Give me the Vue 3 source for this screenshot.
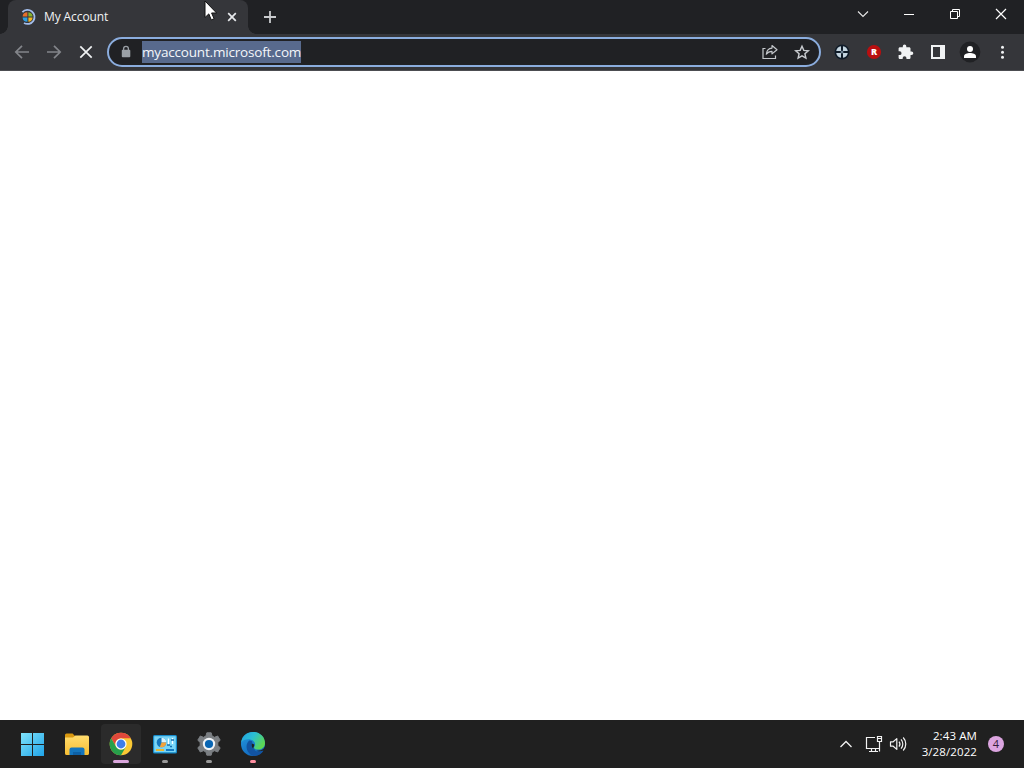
<script setup>
import { ref } from "vue"

const title = ref("My Account")
const url = ref("myaccount.microsoft.com")
const time = ref("2:43 AM")
const date = ref("3/28/2022")
const notifications = ref(4)
</script>

<template>
  <div class="screen">
    <!-- tab strip -->
    <div class="tabstrip">
      <div class="tab">
        <svg width="18" height="18" viewBox="0 0 18 18">
          <path d="M3.4 4.2A7 7 0 1 1 5 15" fill="none" stroke="#a3bdeb" stroke-width="1.8" />
          <path d="M8.4 4.2v4.2H3.6a4.8 4.8 0 0 1 4.8-4.2z" fill="#e5702b" />
          <path d="M9.4 4.2v4.2h4.2a4.8 4.8 0 0 0-4.2-4.2z" fill="#86b32c" />
          <path d="M8.4 13.8V9.4H3.6a4.8 4.8 0 0 0 4.8 4.4z" fill="#2d9fe0" />
          <path d="M9.4 13.8V9.4h4.2a4.8 4.8 0 0 1-4.2 4.4z" fill="#f3b51e" />
        </svg>
        <span class="tab-title">{{ title }}</span>
        <svg width="16" height="16" viewBox="0 0 16 16">
          <path d="M4.2 4.2l7.6 7.6M11.8 4.2l-7.6 7.6" stroke="#e8eaed" stroke-width="1.7" />
        </svg>
      </div>
      <svg class="new-tab" width="28" height="28" viewBox="0 0 28 28">
        <path d="M14 8v12M8 14h12" stroke="#c9cbce" stroke-width="1.8" />
      </svg>
      <div class="win-controls">
        <svg width="46" height="28" viewBox="0 0 46 28">
          <path d="M18 11.5l5 5 5-5" fill="none" stroke="#e8e8e8" stroke-width="1.1" />
        </svg>
        <svg width="46" height="28" viewBox="0 0 46 28">
          <path d="M18 14.5h10" stroke="#fff" stroke-width="1" />
        </svg>
        <svg width="46" height="28" viewBox="0 0 46 28">
          <path d="M18.5 11.5h7v7h-7zM20.5 11.5v-2h7v7h-2" fill="none" stroke="#fff" stroke-width="1" />
        </svg>
        <svg width="46" height="28" viewBox="0 0 46 28">
          <path d="M18 9l10 10M28 9l-10 10" stroke="#fff" stroke-width="1.2" />
        </svg>
      </div>
    </div>

    <!-- toolbar -->
    <div class="toolbar">
      <svg width="32" height="32" viewBox="0 0 32 32">
        <path d="M23 16H10M16 9.8L9.8 16l6.2 6.2" fill="none" stroke="#83858a" stroke-width="1.7" />
      </svg>
      <svg width="32" height="32" viewBox="0 0 32 32">
        <path d="M9 16h13M16 9.8l6.2 6.2-6.2 6.2" fill="none" stroke="#83858a" stroke-width="1.7" />
      </svg>
      <svg width="32" height="32" viewBox="0 0 32 32">
        <path d="M10.3 10.3l11.4 11.4M21.7 10.3L10.3 21.7" stroke="#f1f3f4" stroke-width="1.7" />
      </svg>

      <div class="omnibox">
        <svg width="32" height="26" viewBox="0 0 32 26">
          <path d="M13.6 11.4V9.8a2.4 2.4 0 0 1 4.8 0v1.6" fill="none" stroke="#9aa0a6" stroke-width="1.3" />
          <rect x="11.8" y="10.8" width="8.5" height="7.4" rx=".9" fill="#9aa0a6" />
        </svg>
        <span class="url">{{ url }}</span>
        <svg class="share" width="32" height="26" viewBox="0 0 32 26">
          <path d="M11.5 9.5H9v10h12.5v-3" fill="none" stroke="#c5c8cc" stroke-width="1.2" />
          <path d="M18 6.5l5 4.2-5 4.2v-2.5c-2.8 0-4.4.9-5.7 2.8.3-3.5 2.2-5.8 5.7-6.1z" fill="none" stroke="#c5c8cc" stroke-width="1.2" stroke-linejoin="round" />
        </svg>
        <svg width="32" height="26" viewBox="0 0 32 26">
          <path d="M16 7.3l1.8 4.1 4.5.4-3.4 2.9 1 4.4-3.9-2.3-3.9 2.3 1-4.4-3.4-2.9 4.5-.4z" fill="none" stroke="#c9ccd0" stroke-width="1.4" />
        </svg>
      </div>

      <svg width="32" height="32" viewBox="0 0 32 32">
        <circle cx="16" cy="16" r="7.5" fill="#101c29" />
        <path d="M15 15h-4.8a6 6 0 0 1 4.8-4.8zM17 15v-4.800a6 6 0 0 1 4.800 4.800zM15 17v4.800a6 6 0 0 1-4.800-4.800zM17 17h4.800a6 6 0 0 1-4.800 4.800z" fill="#c3d4df" />
        <circle cx="16" cy="16" r="1.500" fill="#6d8294" />
      </svg>
      <svg width="32" height="32" viewBox="0 0 32 32">
        <circle cx="16" cy="16" r="7.1" fill="#b90f10" />
        <text class="r-mark" x="16" y="19.3" text-anchor="middle">R</text>
      </svg>
      <svg width="32" height="32" viewBox="0 0 32 32">
        <path transform="translate(7.200 7.700) scale(.7)" d="M20.5 11H19V7c0-1.1-.9-2-2-2h-4V3.5a2.5 2.5 0 0 0-5 0V5H4c-1.1 0-2 .9-2 2v3.8h1.5a2.7 2.7 0 0 1 0 5.4H2V20c0 1.1.9 2 2 2h3.8v-1.5a2.7 2.7 0 0 1 5.4 0V22H17c1.1 0 2-.9 2-2v-4h1.5a2.5 2.5 0 0 0 0-5z" fill="#f1f3f4" />
      </svg>
      <svg width="32" height="32" viewBox="0 0 32 32">
        <path d="M9 9h14v14H9zM11 11v10h7V11z" fill="#f1f3f4" fill-rule="evenodd" />
      </svg>
      <svg width="32" height="32" viewBox="0 0 32 32">
        <circle cx="16" cy="16" r="10.4" fill="#202124" />
        <circle cx="16" cy="13" r="3" fill="#fff" />
        <path d="M10 22v-1.6c0-2.2 3.4-3.3 6-3.3s6 1.1 6 3.3V22z" fill="#fff" />
      </svg>
      <svg width="32" height="32" viewBox="0 0 32 32">
        <circle cx="16.5" cy="11.2" r="1.5" fill="#f1f3f4" />
        <circle cx="16.5" cy="16.2" r="1.5" fill="#f1f3f4" />
        <circle cx="16.5" cy="21.2" r="1.5" fill="#f1f3f4" />
      </svg>
    </div>

    <div class="page"></div>

    <!-- taskbar -->
    <div class="taskbar">
      <svg width="44" height="48" viewBox="0 0 44 48">
        <defs>
          <linearGradient id="win" gradientUnits="userSpaceOnUse" x1="11" y1="13" x2="34" y2="36">
            <stop offset="0" stop-color="#7fe3fb" />
            <stop offset="1" stop-color="#1fa3e8" />
          </linearGradient>
        </defs>
        <path d="M11 13h11v11H11zM23 13h11v11H23zM11 25h11v11H11zM23 25h11v11H23z" fill="url(#win)" />
      </svg>

      <svg width="44" height="48" viewBox="0 0 44 48">
        <defs>
          <linearGradient id="folder" x1="0" y1="0" x2="0" y2="1">
            <stop offset="0" stop-color="#ffdc6e" />
            <stop offset="1" stop-color="#f7bd32" />
          </linearGradient>
        </defs>
        <path d="M11 15a1.5 1.5 0 0 1 1.5-1.5h6.1l2.4 2.5v6H11z" fill="#d9980f" />
        <path d="M11 17.5h8l2.4-2h12a1.6 1.6 0 0 1 1.6 1.6v16.4a1.6 1.6 0 0 1-1.6 1.500H12.600a1.600 1.600 0 0 1-1.600-1.500z" fill="url(#folder)" />
        <path d="M15.5 35v-5.500a2 2 0 0 1 2-2h11a2 2 0 0 1 2 2V35z" fill="#1475bd" />
        <path d="M19 32h8v3h-8z" fill="#0d60a5" />
      </svg>

      <div class="task active">
        <svg width="44" height="48" viewBox="0 0 44 48">
          <circle cx="23" cy="24" r="11.3" fill="#fbc934" />
          <path d="M13.2 18.35A11.3 11.3 0 0 1 32.8 18.35H23A5.65 5.65 0 0 0 18.1 26.8z" fill="#e0483b" />
          <path d="M13.2 18.35A11.3 11.3 0 0 0 23 35.3l4.9-8.5a5.65 5.65 0 0 1-9.8 0z" fill="#27a04b" />
          <circle cx="23" cy="24" r="5.6" fill="#fff" />
          <circle cx="23" cy="24" r="4.4" fill="#3f7de8" />
        </svg>
        <span class="indicator wide"></span>
      </div>

      <div class="task">
        <svg width="44" height="48" viewBox="0 0 44 48">
          <rect x="11" y="15" width="24" height="18.5" rx="1.5" fill="#168bcb" />
          <rect x="12.2" y="16.2" width="21.6" height="16" fill="#79d5f6" />
          <circle cx="19.5" cy="22.5" r="4.8" fill="#1677bd" />
          <path d="M19.5 22.5v-4.8a4.8 4.8 0 0 1 4.8 4.8z" fill="#d8f2fc" />
          <path d="M19.5 22.5h4.8a4.8 4.8 0 0 1-6.5 4.5z" fill="#f3a33b" />
          <path d="M26.5 18.5V25M30.5 18v6" stroke="#fff" stroke-width="1.3" />
          <path d="M25 25h3M29 20h3M28 26.5h2" stroke="#176eae" stroke-width="1.7" />
          <path d="M14 30h8" stroke="#e7b832" stroke-width="2" />
          <path d="M24 30h8" stroke="#1679c1" stroke-width="2" />
        </svg>
        <span class="indicator"></span>
      </div>

      <div class="task">
        <svg width="44" height="48" viewBox="0 0 44 48">
          <path d="M20.8 12.8h4.4l.8 3.2 2.500 1.300 3.200-1.300 2.500 4.200-2.400 2.300v3l2.400 2.300-2.500 4.200-3.200-1.300-2.500 1.300-.8 3.200h-4.400l-.8-3.200-2.500-1.300-3.200 1.300-2.500-4.200 2.400-2.300v-3l-2.400-2.300 2.500-4.200 3.200 1.300 2.500-1.300z" fill="#7b7f83" stroke="#7b7f83" stroke-linejoin="round" />
          <circle cx="23" cy="24" r="6.2" fill="#f0f3f6" />
          <circle cx="23" cy="24" r="4.1" fill="#0865b3" />
        </svg>
        <span class="indicator"></span>
      </div>

      <div class="task">
        <svg width="44" height="48" viewBox="0 0 44 48">
          <defs>
            <linearGradient id="edgeTop" x1="0" y1="0" x2="1" y2=".5">
              <stop offset="0" stop-color="#229fe3" />
              <stop offset=".5" stop-color="#2bbfd2" />
              <stop offset="1" stop-color="#5cd653" />
            </linearGradient>
            <linearGradient id="edgeSide" x1="0" y1="0" x2=".6" y2="1">
              <stop offset="0" stop-color="#2499e1" />
              <stop offset="1" stop-color="#1167bd" />
            </linearGradient>
          </defs>
          <circle cx="23" cy="24" r="12" fill="url(#edgeSide)" />
          <path d="M19.3 20.5c-4.5 3.5-3.5 12 3.3 15.2 5 1 8.7-1.8 11-5.3-4 2-8.7 1.3-10.9-1.8-2-2.6-.4-5-.4-6.5 0-1-1.5-1.9-3-1.6z" fill="#1253a2" />
          <path d="M24.3 24.5c0 2-1 2.5-1 3.7 0 1.5 3 2.8 6.2 2.4 2.3-.3 3.8-1.2 5.5-3.5l.5 1.5-1.9 1.9c-4 1.6-8.7.7-10.9-2.3-1.3-1.9-1.2-3.5-.7-4.7z" fill="#202020" />
          <path d="M11.1 22.5C12 16 17 12 23 12c7 0 12 5 12 11 0 4.2-3 6.6-6.5 6.6-2.6 0-4.6-.9-4.6-2 0-.8 1.2-1.3 1.2-3.2 0-3-3-5.2-6.7-5.2-3.3 0-6 1.2-7.3 3.3z" fill="url(#edgeTop)" />
        </svg>
        <span class="indicator pink"></span>
      </div>

      <div class="tray">
        <svg width="24" height="48" viewBox="0 0 24 48">
          <path d="M6.5 27l5.5-5.5 5.5 5.5" fill="none" stroke="#f2f2f2" stroke-width="1.3" />
        </svg>
        <svg class="net" width="24" height="48" viewBox="0 0 24 48">
          <path d="M13 17.5H4.5v11h13M7 31.5h9M9.5 29v2.5M13.5 29v2.5" fill="none" stroke="#f2f2f2" stroke-width="1.2" />
          <path d="M15.5 16.5h4v5h-4zM17.5 21.5v10M16 18.5h3" fill="none" stroke="#f2f2f2" stroke-width="1.2" />
        </svg>
        <svg width="24" height="48" viewBox="0 0 24 48">
          <path d="M4.5 21.8h2.7l3.6-3.2v10.8l-3.6-3.2H4.500z" fill="none" stroke="#f2f2f2" stroke-width="1.2" stroke-linejoin="round" />
          <path d="M13 21.5a4 4 0 0 1 0 5M15 19.3a7 7 0 0 1 0 9.4M17.2 17.5a9.500 9.500 0 0 1 0 13" fill="none" stroke="#f2f2f2" stroke-width="1.2" />
        </svg>
        <div class="clock">
          <div>{{ time }}</div>
          <div>{{ date }}</div>
        </div>
        <span class="badge">{{ notifications }}</span>
      </div>
    </div>

    <!-- mouse pointer -->
    <svg class="cursor" width="14" height="22" viewBox="0 0 14 22">
      <path d="M1 1v16.5l3.8-3.6 2.5 6 2.8-1.2-2.5-5.7h5z" fill="#fff" stroke="#111" stroke-width="1" />
    </svg>
  </div>
</template>

<style>
body {
  margin: 0;
  overflow: hidden;
}
</style>

<style scoped>
.screen {
  position: relative;
  display: flex;
  flex-direction: column;
  width: 1024px;
  height: 768px;
  background: #fff;
  font-family: "Open Sans", "Noto Sans", sans-serif;
}

svg {
  display: block;
  flex: none;
}

.tabstrip {
  display: flex;
  height: 34px;
  padding-left: 8px;
  background: #202124;
}

.tab {
  position: relative;
  display: flex;
  align-items: center;
  box-sizing: border-box;
  width: 240px;
  height: 34px;
  padding: 0 8px 0 11px;
  border-radius: 8px 8px 0 0;
  background: #35363a;
}

/* curved feet of the active tab */
.tab::before,
.tab::after {
  content: "";
  position: absolute;
  bottom: 0;
  width: 8px;
  height: 8px;
}

.tab::before {
  left: -8px;
  background: radial-gradient(circle at 0 0, transparent 7.5px, #35363a 8px);
}

.tab::after {
  right: -8px;
  background: radial-gradient(circle at 100% 0, transparent 7.5px, #35363a 8px);
}

.tab-title {
  flex: 1;
  margin-left: 7px;
  color: #f1f3f4;
  font-size: 12px;
  line-height: 34px;
  letter-spacing: -0.1px;
}

.new-tab {
  margin: 3px 0 0 8px;
}

.win-controls {
  display: flex;
  margin-left: auto;
}

.toolbar {
  display: flex;
  align-items: center;
  box-sizing: border-box;
  height: 37px;
  padding-left: 6px;
  border-bottom: 1px solid #4c4d51;
  background: #35363a;
}

.omnibox {
  display: flex;
  align-items: center;
  box-sizing: border-box;
  width: 714px;
  height: 30px;
  margin: 0 5px;
  padding: 0 1px;
  border: 2px solid #8badde;
  border-radius: 15px;
  background: #202124;
}

.url {
  height: 22px;
  background: #586a8d;
  color: #f4f6fa;
  font-size: 13.5px;
  line-height: 22px;
  letter-spacing: -0.18px;
  white-space: nowrap;
}

.share {
  margin-left: auto;
}

.r-mark {
  fill: #fff;
  font-size: 9px;
  font-weight: 800;
}

.page {
  flex: 1;
}

.taskbar {
  display: flex;
  height: 48px;
  padding-left: 10px;
  background: #202020;
}

.task {
  display: flex;
  flex-direction: column;
  align-items: center;
  width: 44px;
  height: 48px;
}

.active {
  box-sizing: border-box;
  width: 40px;
  height: 40px;
  margin: 4px 1px 4px 3px;
  border-radius: 4px;
  background: #2b2b2b;
}

.active svg {
  margin: -4px 0 0 -2px;
}

.indicator {
  flex: none;
  width: 6px;
  height: 3px;
  margin: -8px 0 0 2px;
  border-radius: 2px;
  background: #9a9a9a;
}

.wide {
  width: 16px;
  margin-left: 0;
  background: #dba7dd;
}

.pink {
  background: #ff8ea0;
}

.tray {
  display: flex;
  align-items: center;
  margin-left: auto;
  padding-right: 20px;
  color: #fff;
}

.net {
  margin-left: 4px;
}

.clock {
  width: 67px;
  font-size: 11.5px;
  line-height: 16px;
  letter-spacing: 0.1px;
  text-align: right;
}

.badge {
  width: 16px;
  height: 16px;
  margin-left: 11px;
  border-radius: 50%;
  background: #dca5e0;
  color: #33203a;
  font-size: 11px;
  line-height: 16px;
  text-align: center;
}

.cursor {
  position: absolute;
  left: 204px;
  top: 0;
}
</style>
